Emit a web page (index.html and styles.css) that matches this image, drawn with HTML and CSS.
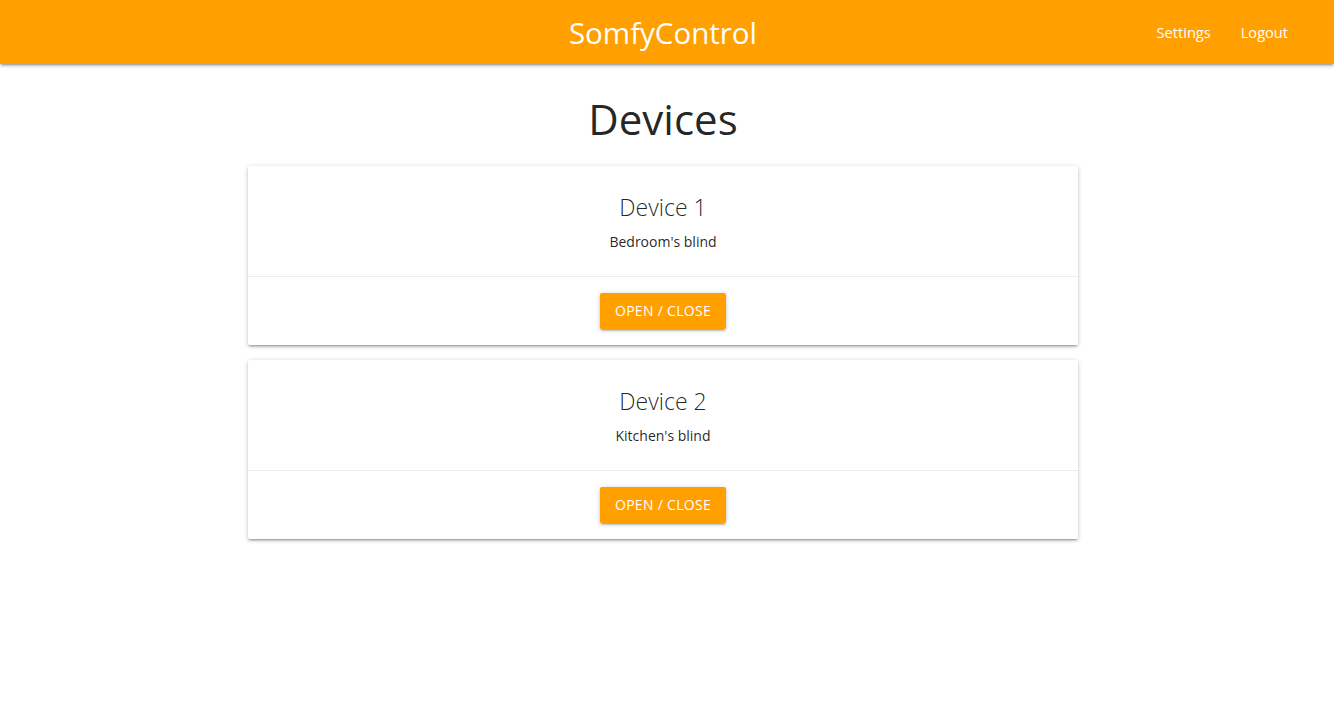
FILE: index.html
```html
<!DOCTYPE html>
<html lang="en">
<head>
<meta charset="utf-8">
<title>SomfyControl</title>
<link rel="stylesheet" href="styles.css">
</head>
<body>
<nav class="navbar">
  <div class="nav-inner">
    <a class="brand" href="#">SomfyControl</a>
    <ul class="nav-links">
      <li><a href="#">Settings</a></li>
      <li><a href="#">Logout</a></li>
    </ul>
  </div>
</nav>
<main class="main">
  <h1 class="page-title">Devices</h1>
  <div class="cards">
    <div class="card">
      <div class="card-content">
        <span class="card-title">Device 1</span>
        <p class="card-text">Bedroom's blind</p>
      </div>
      <div class="card-action">
        <button class="btn">Open / Close</button>
      </div>
    </div>
    <div class="card">
      <div class="card-content">
        <span class="card-title">Device 2</span>
        <p class="card-text">Kitchen's blind</p>
      </div>
      <div class="card-action">
        <button class="btn">Open / Close</button>
      </div>
    </div>
  </div>
</main>
</body>
</html>
```

FILE: styles.css
```css
* { box-sizing: border-box; }
html, body { margin: 0; padding: 0; }
body {
  font-family: "Open Sans", "Noto Sans", sans-serif;
  color: rgba(0,0,0,0.87);
  background: #fff;
}
.navbar {
  height: 64px;
  background: #ffa000;
  box-shadow: 0 2px 2px 0 rgba(0,0,0,0.14), 0 3px 1px -2px rgba(0,0,0,0.12), 0 1px 5px 0 rgba(0,0,0,0.2);
  position: relative;
}
.nav-inner {
  height: 64px;
  width: 1326px;
  position: relative;
  display: flex;
  align-items: center;
  justify-content: flex-end;
  padding-right: 23px;
}
.brand {
  position: absolute;
  left: 50%;
  top: 0;
  transform: translateX(-50%);
  color: #fff;
  text-decoration: none;
  font-size: 29.5px;
  line-height: 66px;
}
.nav-links {
  list-style: none;
  margin: 0;
  padding: 0;
  display: flex;
}
.nav-links a {
  display: block;
  color: #fff;
  text-decoration: none;
  font-size: 14.6px;
  padding: 0 15px;
  line-height: 64px;
}
.main {
  width: 1326px;
  display: flex;
  flex-direction: column;
  align-items: center;
  padding-bottom: 40px;
}
.page-title {
  font-weight: 400;
  font-size: 42px;
  line-height: 48px;
  margin: 31px 0 23px;
}
.cards {
  width: 830px;
  display: flex;
  flex-direction: column;
  gap: 15px;
  margin-bottom: 16px;
}
.card {
  background: #fff;
  border-radius: 2px;
  box-shadow: 0 2px 2px 0 rgba(0,0,0,0.14), 0 3px 1px -2px rgba(0,0,0,0.12), 0 1px 5px 0 rgba(0,0,0,0.2);
}
.card-content {
  padding: 25px 24px 24px;
  text-align: center;
}
.card-title {
  display: block;
  font-size: 23px;
  font-weight: 300;
  line-height: 32px;
  margin-bottom: 8px;
}
.card-text {
  margin: 0;
  font-size: 14px;
  line-height: 21px;
}
.card-action {
  border-top: 1px solid rgba(160,160,160,0.2);
  padding: 16px 24px;
  display: flex;
  justify-content: center;
}
.btn {
  height: 36px;
  line-height: 36px;
  padding: 0 15px;
  border: none;
  border-radius: 2px;
  background: #ffa000;
  color: #fff;
  font-family: inherit;
  font-size: 14px;
  text-transform: uppercase;
  letter-spacing: 0.3px;
  box-shadow: 0 2px 2px 0 rgba(0,0,0,0.14), 0 3px 1px -2px rgba(0,0,0,0.12), 0 1px 5px 0 rgba(0,0,0,0.2);
  cursor: pointer;
}
```
